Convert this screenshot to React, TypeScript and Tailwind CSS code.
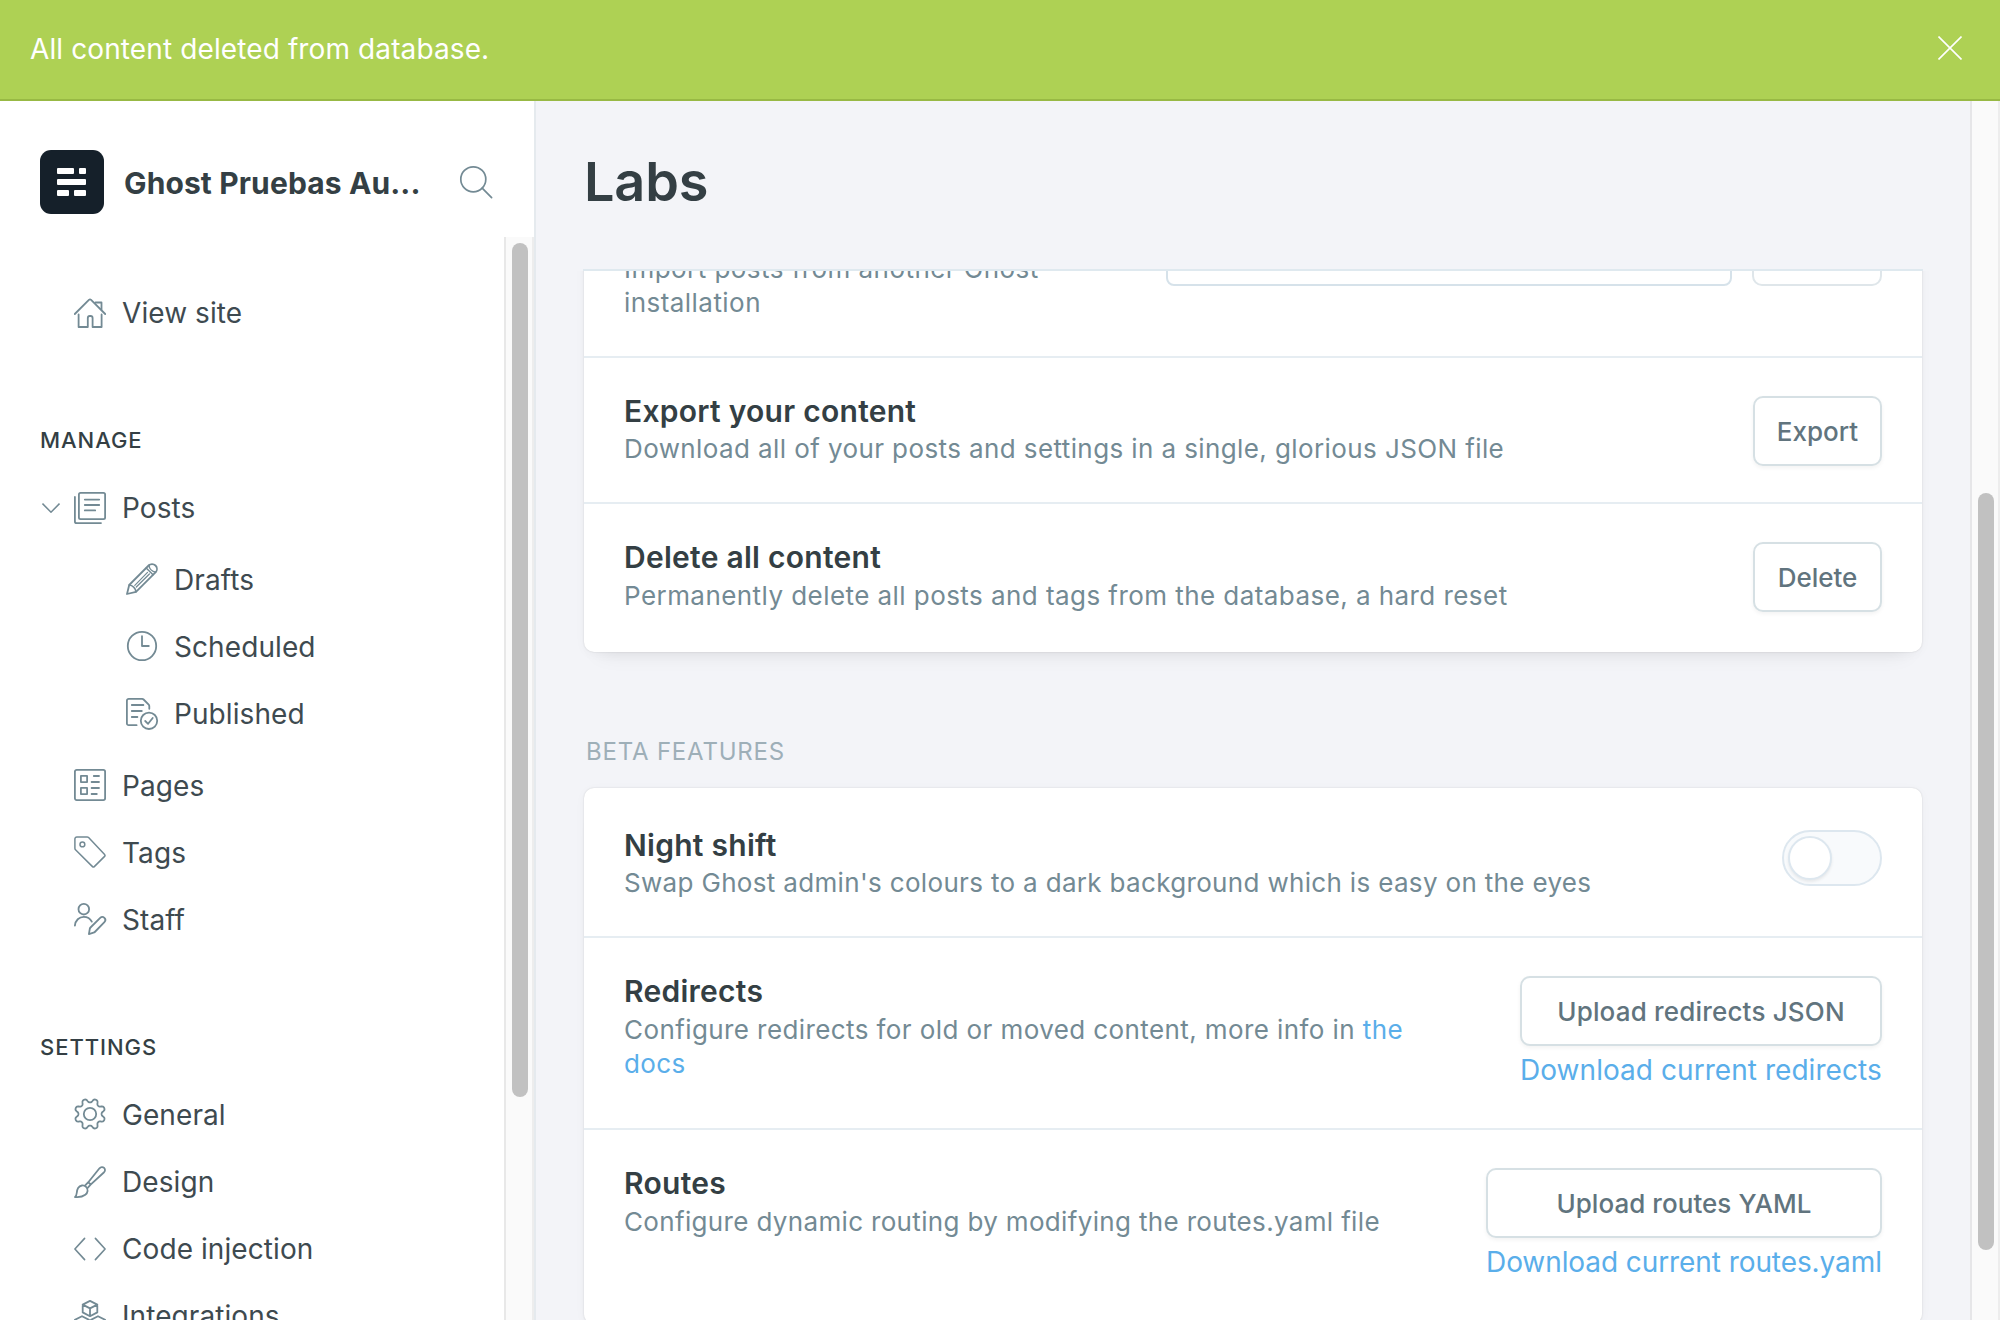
import type { ReactNode } from "react";

/* ---------- icons ---------- */

function Icon({ children, className = "" }: { children: ReactNode; className?: string }) {
  return (
    <svg
      viewBox="0 0 32 32"
      className={`size-8 shrink-0 overflow-visible text-[#738a94] ${className}`}
      fill="none"
      stroke="currentColor"
      strokeWidth={1.8}
      strokeLinecap="round"
      strokeLinejoin="round"
    >
      {children}
    </svg>
  );
}

function gearPath() {
  const points: string[] = [];
  for (let i = 0; i < 180; i++) {
    const a = (i / 180) * Math.PI * 2;
    const wave = Math.tanh(1.5 * Math.cos(8 * (a - Math.PI / 8))) / Math.tanh(1.5);
    const r = 13.5 + 1.9 * wave;
    points.push(`${(16 + r * Math.cos(a)).toFixed(2)} ${(16 + r * Math.sin(a)).toFixed(2)}`);
  }
  return `M${points.join("L")}Z`;
}

const icons: Record<string, ReactNode> = {
  home: (
    <>
      <path d="M.8 17 14.9 2.9a1.6 1.6 0 0 1 2.2 0L31.2 17" />
      <path d="M4.6 17.5V30h9.2V21a2 2 0 0 1 2-2h.8a2 2 0 0 1 2 2v9h9V17.5M21.5 5.5h6v7" />
    </>
  ),
  posts: (
    <>
      <rect x="4.9" y=".9" width="26.2" height="26.2" rx="1.6" />
      <path d="M10.8 7.6h14.4M10.8 13h14.4M10.8 18.4h10.4M.9 5v24.4a1.7 1.7 0 0 0 1.7 1.7H27" />
    </>
  ),
  drafts: (
    <>
      <path d="M3.2 22 22.6 2.500a4.800 4.800 0 0 1 6.900 6.900L10 28.800 1 31Z" />
      <path d="M3.200 22c3.300.2 6.400 3.200 6.800 6.800M20.200 5l6.800 6.800M22.900 2.300c.4 3.300 3.300 6.300 6.800 6.900" strokeWidth={1.500} />
      <path d="m8.800 22.300 12.700-12.900M10.300 24 23.400 11" strokeWidth={1.200} />
    </>
  ),
  scheduled: (
    <>
      <circle cx="16" cy="16" r="14.2" />
      <path d="M16 6.2V16h6.8" />
    </>
  ),
  published: (
    <>
      <path d="M10.6 27.2H2.7a1.8 1.8 0 0 1-1.8-1.8V2.7A1.8 1.8 0 0 1 2.7.9h13.4c.6 0 1.1.2 1.5.6l5.1 5.2c.4.4.6.9.6 1.5v2.6" />
      <path d="M5.8 7h11.6M5.8 13h10M5.8 19h5.6" />
      <circle cx="23" cy="22.8" r="8.2" />
      <path d="m19.2 23 2.9 2.8 4.6-5.8" />
    </>
  ),
  pages: (
    <>
      <rect x=".9" y=".9" width="30.2" height="30.2" rx="1.8" />
      <rect x="6.9" y="6.9" width="6.2" height="6.2" />
      <rect x="6.9" y="18.9" width="6.2" height="6.2" />
      <path d="M19.8 7h5.2M17.6 13h7.4M17.6 19h7.4M17.6 25h5.2" />
    </>
  ),
  tags: (
    <g strokeWidth={1.5}>
      <path d="M.9 12.2V2.9a2 2 0 0 1 2-2h10.2c.6 0 1.1.2 1.5.6l16 17.1c.6.6.6 1.2 0 1.8L20.3 30.6c-.6.6-1.2.6-1.8 0L1.5 13.8c-.4-.4-.6-1-.6-1.6Z" />
      <circle cx="8.4" cy="8.4" r="2.4" />
    </g>
  ),
  staff: (
    <>
      <circle cx="9.8" cy="6.2" r="5.3" />
      <path d="M.9 22.6c.5-5.2 4.2-8.8 8.9-8.8 3.4 0 6.4 1.8 8 4.8" />
      <path d="m14.9 31.1.9-5.300c.1-.5.3-.9.7-1.300l9.700-9.600a2.950 2.950 0 0 1 4.200 4.200l-9.600 9.900c-.4.4-.8.6-1.300.7Z" />
    </>
  ),
  general: (
    <>
      <path d={gearPath()} />
      <circle cx="16" cy="16" r="6.2" />
    </>
  ),
  design: (
    <>
      <path d="M1 31c2.6-1.6 1-5.6 3.1-9 1.8-2.900 5.700-3.400 8-1.200 2.400 2.300 1.900 6-.8 8C8.500 30.900 4.600 31.400 1 31Z" />
      <path d="M14.300 16.200 25.500 2.300c1.300-1.500 3.300-1.600 4.600-.4 1.300 1.300 1.200 3.300-.3 4.600L16.600 18.600l-2.900 3.200M11 19.700l3.300-3.500 2.400 2.300" />
    </>
  ),
  code: <path d="M10.600 5.400.9 16l9.700 10.600M21.400 5.400 31.100 16l-9.700 10.600" strokeWidth={1.600} />,
  integrations: (
    <>
      <path d="m16 .9 7.300 3.700v7.800L16 16.200l-7.300-3.800V4.600ZM8.700 4.600 16 8.400l7.300-3.800M16 8.400v7.800" />
      <path d="m8 16.200 7 3.600v7.800L8 31.200.9 27.600v-7.800ZM24 16.200l7.100 3.600v7.800L24 31.200l-7-3.600v-7.800Z" />
    </>
  ),
};

/* ---------- sidebar ---------- */

function NavItem({ icon, label, sub = false, low = false, open = false }: { icon: string; label: string; sub?: boolean; low?: boolean; open?: boolean }) {
  return (
    <a className={`flex h-[67px] gap-4 ${sub ? "pl-[126px]" : open ? "pl-[42px]" : "pl-[74px]"}`}>
      {open && (
        <svg viewBox="0 0 18 10" className="-mr-0.5 mt-[29px] h-2.5 w-[18px] text-[#738a94]" fill="none" stroke="currentColor" strokeWidth={1.5}>
          <path d="M.5.6 9 9.2 17.5.6" />
        </svg>
      )}
      <Icon className={low ? "mt-[18px]" : "mt-[17px]"}>{icons[icon]}</Icon>
      <span className="text-[28px] leading-[69px] tracking-[0.08px] whitespace-nowrap text-[#3e4a50]">{label}</span>
    </a>
  );
}

function NavHeading({ children }: { children: ReactNode }) {
  return <h2 className="pl-10 text-[22px] leading-6 font-[450] tracking-[0.95px] text-[#343f44]">{children}</h2>;
}

function Sidebar() {
  return (
    <aside className="flex w-[536px] shrink-0 flex-col border-r-2 border-[#e5eaee] bg-white">
      <header className="flex h-[136px] shrink-0 items-start pt-[49px] pl-10">
        <div className="flex size-16 shrink-0 items-center justify-center rounded-[11px] bg-[#15202a]">
          <div className="flex w-[29px] -translate-x-px flex-col gap-[5px]">
            <div className="flex h-1.5 gap-[5px]">
              <i className="w-[17px] rounded-[1px] bg-white" />
              <i className="flex-1 rounded-[1px] bg-white" />
            </div>
            <i className="h-1.5 rounded-[1px] bg-white" />
            <div className="flex h-1.5 gap-[5px]">
              <i className="w-3 rounded-[1px] bg-white" />
              <i className="flex-1 rounded-[1px] bg-white" />
            </div>
          </div>
        </div>
        <h1 className="ml-5 w-[336px] text-[30px] leading-[66px] font-bold tracking-[0.12px] whitespace-nowrap text-[#343f44]">Ghost Pruebas Au...</h1>
        <Icon className="mt-4">
          <circle cx="13.3" cy="13.3" r="12.5" strokeWidth={1.7} />
          <path d="m22.2 22.2 9.400 9.400" strokeWidth={1.7} />
        </Icon>
      </header>
      <div className="flex min-h-0 flex-1">
        <nav className="w-[504px] overflow-hidden pt-[42px]">
          <NavItem icon="home" label="View site" low />
          <div className="mt-[82px]">
            <NavHeading>MANAGE</NavHeading>
            <div className="mt-[22px]">
              <NavItem icon="posts" label="Posts" open low />
              <div className="my-[5px]">
                <NavItem icon="drafts" label="Drafts" sub />
                <NavItem icon="scheduled" label="Scheduled" sub />
                <NavItem icon="published" label="Published" sub low />
              </div>
              <NavItem icon="pages" label="Pages" />
              <NavItem icon="tags" label="Tags" />
              <NavItem icon="staff" label="Staff" />
            </div>
          </div>
          <div className="mt-[82px]">
            <NavHeading>SETTINGS</NavHeading>
            <div className="mt-[22px]">
              <NavItem icon="general" label="General" />
              <NavItem icon="design" label="Design" low />
              <NavItem icon="code" label="Code injection" low />
              <NavItem icon="integrations" label="Integrations" low />
            </div>
          </div>
        </nav>
        <div className="w-[30px] border-x-2 border-r-[#ededed] border-l-[#e8e8e8] bg-[#fafafa] pt-1.5 pl-1.5">
          <div className="h-[854px] w-4 rounded-full bg-[#c1c1c1]" />
        </div>
      </div>
    </aside>
  );
}

/* ---------- settings rows ---------- */

const CARD = "rounded-[10px] bg-white shadow-[0_0_2px_rgba(0,0,0,0.14),0_2px_12px_rgba(0,0,0,0.03),0_16px_20px_-16px_rgba(0,0,0,0.1)]";

function Row({ title, desc, height, descClass = "mt-[3px] tracking-[0.4px]", className = "", children }: { title?: string; desc: ReactNode; height: string; descClass?: string; className?: string; children: ReactNode }) {
  return (
    <section className={`flex items-start justify-between pr-10 pl-10 ${height} ${className}`}>
      <div className="pt-[35px]">
        <h3 className="h-9 text-[30px] leading-9 font-semibold tracking-[0.27px] text-[#343f44]">{title}</h3>
        <p className={`text-[26px] leading-[34px] text-[#738a94] ${descClass}`}>{desc}</p>
      </div>
      <div className="flex shrink-0 pt-[38px]">{children}</div>
    </section>
  );
}

function Button({ children, className = "" }: { children: ReactNode; className?: string }) {
  return (
    <button className={`h-[70px] rounded-[10px] border-2 border-[#d6e0e4] bg-white pt-0.5 text-[26px] leading-[64px] font-[450] text-[#61747e] shadow-[0_2px_4px_rgba(0,0,0,0.05)] ${className}`}>
      {children}
    </button>
  );
}

function Divider() {
  return <div className="h-0.5 bg-[#e6edf2]" />;
}

function Upload({ label, link, width, labelClass, linkClass }: { label: string; link: string; width: string; labelClass: string; linkClass: string }) {
  return (
    <div className={`flex flex-col ${width}`}>
      <Button className={`w-full ${labelClass}`}>{label}</Button>
      <a className={`mt-1 text-[28px] leading-10 whitespace-nowrap text-[#5aaeea] ${linkClass}`}>{link}</a>
    </div>
  );
}

export default function App() {
  return (
    <div className="flex h-[1320px] w-[2000px] flex-col overflow-hidden bg-[#f3f4f8] font-['Inter','Liberation_Sans',sans-serif]">
      <div className="flex h-[101px] shrink-0 items-center justify-between border-b-2 border-[#98b944] bg-[#aed154] pr-[38px] pb-[3px] pl-[30px] text-white">
        <span className="pt-0.5 text-[28px] leading-10 tracking-[0.11px]">All content deleted from database.</span>
        <svg viewBox="0 0 24 24" className="size-6" fill="none" stroke="currentColor" strokeWidth={1.6}>
          <path d="m.5.5 23 23M23.5.5l-23 23" />
        </svg>
      </div>

      <div className="flex min-h-0 flex-1">
        <Sidebar />

        <main className="flex min-w-0 flex-1 flex-col">
          <h2 className="h-[168px] shrink-0 pt-[49px] pl-12 text-[54px] leading-[64px] font-semibold tracking-[-0.2px] text-[#343f44]">Labs</h2>
          <div className="ml-[47px] h-0.5 w-[1340px] shrink-0 bg-[#dfe9ef]" />
          <div className="min-h-0 flex-1 overflow-hidden pl-12">
            <div className={`-mt-[93px] w-[1338px] ${CARD}`}>
              <Row desc="Import posts from another Ghost installation" height="h-[178px]" descClass="mt-[3px] max-w-[480px] tracking-[0.45px]">
                <div className="mr-5 h-[70px] w-[566px] rounded-lg border-2 border-[#d6e2ea] bg-white" />
                <div className="h-[70px] w-[130px] rounded-[10px] border-2 border-[#dfe6ea] bg-white" />
              </Row>
              <Divider />
              <Row title="Export your content" desc="Download all of your posts and settings in a single, glorious JSON file" height="h-[144px]">
                <Button className="w-[129px]">Export</Button>
              </Row>
              <Divider />
              <Row title="Delete all content" desc="Permanently delete all posts and tags from the database, a hard reset" height="h-[148px]" descClass="mt-1 tracking-[0.44px]">
                <Button className="w-[129px]">Delete</Button>
              </Row>
            </div>

            <h4 className="mt-[84px] mb-5 pl-0.5 text-2xl leading-8 tracking-[0.8px] text-[#9eafb8]">BETA FEATURES</h4>

            <div className={`w-[1338px] ${CARD}`}>
              <Row title="Night shift" desc="Swap Ghost admin's colours to a dark background which is easy on the eyes" height="h-[148px]" className="pt-1" descClass="mt-[3px] tracking-[0.33px]">
                <div className="h-14 w-[100px] rounded-full border-2 border-[#dde7ef] bg-[#f8fafc] p-1">
                  <div className="size-11 rounded-full border-2 border-[#dde7ef] bg-white shadow-[0_2px_3px_rgba(0,0,0,0.07)]" />
                </div>
              </Row>
              <Divider />
              <Row
                title="Redirects"
                desc={<>Configure redirects for old or moved content, more info in <a className="text-[#5aaeea]">the docs</a></>}
                height="h-[190px]"
                descClass="mt-1 max-w-[810px] tracking-[0.41px]"
              >
                <Upload label="Upload redirects JSON" link="Download current redirects" width="w-[362px]" labelClass="tracking-[0.18px]" linkClass="tracking-[0.05px]" />
              </Row>
              <Divider />
              <Row title="Routes" desc="Configure dynamic routing by modifying the routes.yaml file" height="h-[194px]" descClass="mt-1 tracking-[0.34px]">
                <Upload label="Upload routes YAML" link="Download current routes.yaml" width="w-[396px]" labelClass="tracking-[0.05px]" linkClass="tracking-[-0.08px]" />
              </Row>
            </div>
          </div>
        </main>

        <div className="w-[30px] shrink-0 border-x-2 border-r-[#ededed] border-l-[#e6e6e8] bg-[#fafafa] pt-[392px] pl-1.5">
          <div className="h-[757px] w-4 rounded-full bg-[#c1c1c1]" />
        </div>
      </div>
    </div>
  );
}
